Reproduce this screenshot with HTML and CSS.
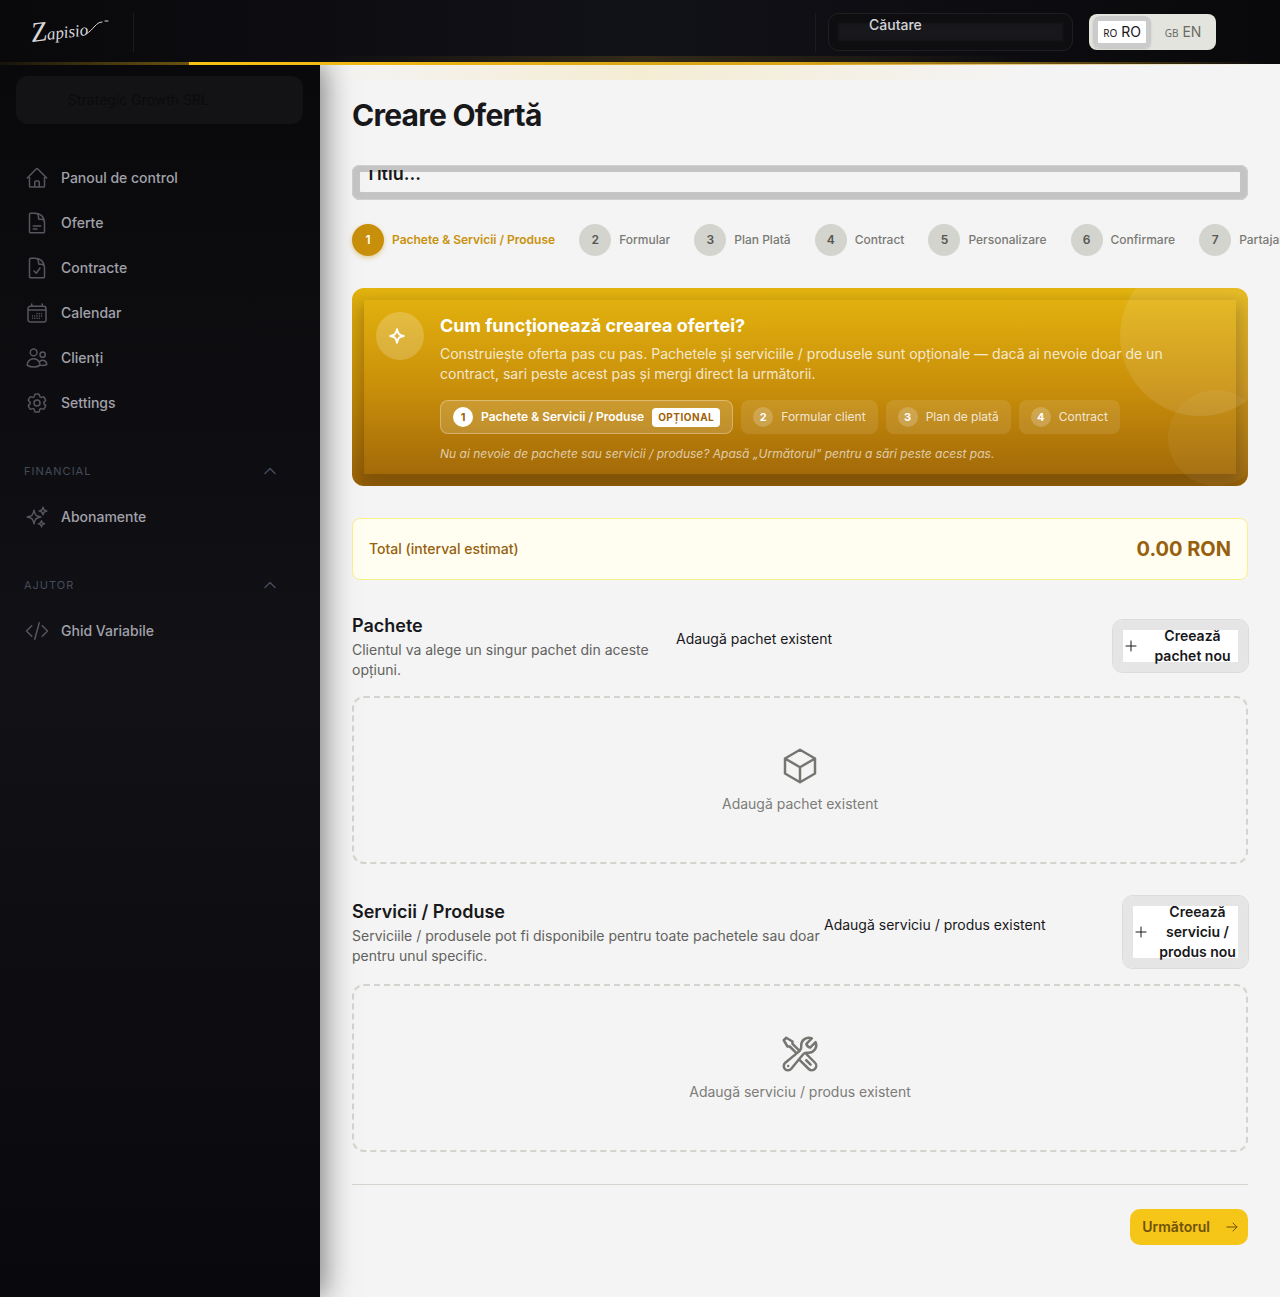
FILE: index.html
```html
<!DOCTYPE html>
<html lang="ro">
<head>
  <meta charset="UTF-8">
  <meta name="viewport" content="width=device-width, initial-scale=1.0">
  <title>Creare Ofertă</title>
  <link rel="stylesheet" href="styles.css">
</head>
<body>
  <header class="topbar">
    <a href="#" class="logo" aria-label="Zapisio">
      <svg width="80" height="34" viewBox="0 0 80 34">
        <text class="logo-text" x="2" y="27" transform="rotate(-7 2 27)"><tspan class="logo-initial">Z</tspan>apisio</text>
        <path d="M56 19c4-2 6-5 9-8 2-2 4-4 7-4M75 6h3" />
      </svg>
    </a>
    <span class="divider"></span>
    <div class="topbar-right">
      <span class="divider"></span>
      <div class="search">
        <input type="text" placeholder="Căutare" aria-label="Căutare">
      </div>
      <div class="lang">
        <button type="button" class="lang-btn active"><small>RO</small> RO</button>
        <button type="button" class="lang-btn"><small>GB</small> EN</button>
      </div>
    </div>
  </header>

  <div class="layout">
    <aside class="sidebar">
      <button type="button" class="company">Strategic Growth SRL</button>

      <nav class="nav">
        <a href="#" class="nav-item">
          <svg class="icon" viewBox="0 0 24 24"><path d="m2.25 12 8.954-8.955c.44-.439 1.152-.439 1.591 0L21.75 12M4.5 9.75v10.125c0 .621.504 1.125 1.125 1.125H9.75v-4.875c0-.621.504-1.125 1.125-1.125h2.25c.621 0 1.125.504 1.125 1.125V21h4.125c.621 0 1.125-.504 1.125-1.125V9.75M8.25 21h8.25" /></svg>
          Panoul de control
        </a>
        <a href="#" class="nav-item">
          <svg class="icon" viewBox="0 0 24 24"><path d="M19.5 14.25v-2.625a3.375 3.375 0 0 0-3.375-3.375h-1.5A1.125 1.125 0 0 1 13.5 7.125v-1.5a3.375 3.375 0 0 0-3.375-3.375H8.25m0 12.75h7.5m-7.5 3H12M10.5 2.25H5.625c-.621 0-1.125.504-1.125 1.125v17.25c0 .621.504 1.125 1.125 1.125h12.75c.621 0 1.125-.504 1.125-1.125V11.25a9 9 0 0 0-9-9Z" /></svg>
          Oferte
        </a>
        <a href="#" class="nav-item">
          <svg class="icon" viewBox="0 0 24 24"><path d="M10.125 2.25h-4.5c-.621 0-1.125.504-1.125 1.125v17.25c0 .621.504 1.125 1.125 1.125h12.75c.621 0 1.125-.504 1.125-1.125v-9M10.125 2.25h.375a9 9 0 0 1 9 9v.375M10.125 2.25A3.375 3.375 0 0 1 13.5 5.625v1.5c0 .621.504 1.125 1.125 1.125h1.5a3.375 3.375 0 0 1 3.375 3.375M9 15l2.25 2.25L15 12" /></svg>
          Contracte
        </a>
        <a href="#" class="nav-item">
          <svg class="icon" viewBox="0 0 24 24"><path d="M6.75 3v2.25M17.25 3v2.25M3 18.75V7.5a2.25 2.25 0 0 1 2.25-2.25h13.5A2.25 2.25 0 0 1 21 7.5v11.25m-18 0A2.25 2.25 0 0 0 5.25 21h13.5A2.25 2.25 0 0 0 21 18.75m-18 0v-7.5M21 18.75v-7.5M3 9h18M12 12.75h.008v.008H12v-.008ZM12 15h.008v.008H12V15Zm0 2.25h.008v.008H12v-.008ZM9.75 15h.008v.008H9.75V15Zm0 2.25h.008v.008H9.75v-.008ZM7.5 15h.008v.008H7.5V15Zm0 2.25h.008v.008H7.5v-.008Zm6.75-4.5h.008v.008h-.008v-.008Zm0 2.25h.008v.008h-.008V15Zm0 2.25h.008v.008h-.008v-.008Zm2.25-4.5h.008v.008H16.5v-.008Zm0 2.25h.008v.008H16.5V15Z" /></svg>
          Calendar
        </a>
        <a href="#" class="nav-item">
          <svg class="icon" viewBox="0 0 24 24"><path d="M15 19.128a9.38 9.38 0 0 0 2.625.372 9.337 9.337 0 0 0 4.121-.952 4.125 4.125 0 0 0-7.533-2.493M15 19.128v-.003c0-1.113-.285-2.16-.786-3.07M15 19.128v.106A12.318 12.318 0 0 1 8.624 21c-2.331 0-4.512-.645-6.374-1.766l-.001-.109a6.375 6.375 0 0 1 11.964-3.07M12 6.375a3.375 3.375 0 1 1-6.75 0 3.375 3.375 0 0 1 6.75 0Zm8.25 2.25a2.625 2.625 0 1 1-5.25 0 2.625 2.625 0 0 1 5.25 0Z" /></svg>
          Clienți
        </a>
        <a href="#" class="nav-item">
          <svg class="icon" viewBox="0 0 24 24"><path d="M9.594 3.94c.09-.542.56-.94 1.11-.94h2.593c.55 0 1.02.398 1.11.94l.213 1.281c.063.374.313.686.645.87.074.04.147.083.22.127.325.196.72.257 1.075.124l1.217-.456a1.125 1.125 0 0 1 1.37.49l1.296 2.247a1.125 1.125 0 0 1-.26 1.431l-1.003.827c-.293.241-.438.613-.43.992a7.723 7.723 0 0 1 0 .255c-.008.378.137.75.43.991l1.004.827c.424.35.534.955.26 1.43l-1.298 2.247a1.125 1.125 0 0 1-1.369.491l-1.217-.456c-.355-.133-.75-.072-1.076.124a6.47 6.47 0 0 1-.22.128c-.331.183-.581.495-.644.869l-.213 1.281c-.09.543-.56.94-1.11.94h-2.594c-.55 0-1.019-.398-1.11-.94l-.213-1.281c-.062-.374-.312-.686-.644-.87a6.52 6.52 0 0 1-.22-.127c-.325-.196-.72-.257-1.076-.124l-1.217.456a1.125 1.125 0 0 1-1.369-.49l-1.297-2.247a1.125 1.125 0 0 1 .26-1.431l1.004-.827c.292-.24.437-.613.43-.991a6.932 6.932 0 0 1 0-.255c.007-.38-.138-.751-.43-.992l-1.004-.827a1.125 1.125 0 0 1-.26-1.43l1.297-2.247a1.125 1.125 0 0 1 1.37-.491l1.216.456c.356.133.751.072 1.076-.124.072-.044.146-.086.22-.128.332-.183.582-.495.644-.869l.214-1.28Z" /><path d="M15 12a3 3 0 1 1-6 0 3 3 0 0 1 6 0Z" /></svg>
          Settings
        </a>
      </nav>

      <button type="button" class="nav-heading">
        FINANCIAL
        <svg class="chevron" viewBox="0 0 12 8"><path d="M1 6.5 6 1.5l5 5" /></svg>
      </button>
      <nav class="nav">
        <a href="#" class="nav-item">
          <svg class="icon" viewBox="0 0 24 24"><path d="M9.813 15.904 9 18.75l-.813-2.846a4.5 4.5 0 0 0-3.09-3.09L2.25 12l2.846-.813a4.5 4.5 0 0 0 3.09-3.09L9 5.25l.813 2.846a4.5 4.5 0 0 0 3.09 3.09L15.75 12l-2.846.813a4.5 4.5 0 0 0-3.09 3.09ZM18.259 8.715 18 9.75l-.259-1.035a3.375 3.375 0 0 0-2.455-2.456L14.25 6l1.036-.259a3.375 3.375 0 0 0 2.455-2.456L18 2.25l.259 1.035a3.375 3.375 0 0 0 2.456 2.456L21.75 6l-1.035.259a3.375 3.375 0 0 0-2.456 2.456ZM16.894 20.567 16.5 21.75l-.394-1.183a2.25 2.25 0 0 0-1.423-1.423L13.5 18.75l1.183-.394a2.25 2.25 0 0 0 1.423-1.423l.394-1.183.394 1.183a2.25 2.25 0 0 0 1.423 1.423l1.183.394-1.183.394a2.25 2.25 0 0 0-1.423 1.423Z" /></svg>
          Abonamente
        </a>
      </nav>

      <button type="button" class="nav-heading">
        AJUTOR
        <svg class="chevron" viewBox="0 0 12 8"><path d="M1 6.5 6 1.5l5 5" /></svg>
      </button>
      <nav class="nav">
        <a href="#" class="nav-item">
          <svg class="icon" viewBox="0 0 24 24"><path d="M17.25 6.75 22.5 12l-5.25 5.25m-10.5 0L1.5 12l5.25-5.25m7.5-3-4.5 16.5" /></svg>
          Ghid Variabile
        </a>
      </nav>
    </aside>

    <main class="content">
      <h1>Creare Ofertă</h1>

      <div class="title-field">
        <div class="title-clip">
          <input type="text" placeholder="Titlu..." aria-label="Titlu">
        </div>
      </div>

      <ol class="steps">
        <li class="step active"><span class="step-number">1</span>Pachete &amp; Servicii / Produse</li>
        <li class="step"><span class="step-number">2</span>Formular</li>
        <li class="step"><span class="step-number">3</span>Plan Plată</li>
        <li class="step"><span class="step-number">4</span>Contract</li>
        <li class="step"><span class="step-number">5</span>Personalizare</li>
        <li class="step"><span class="step-number">6</span>Confirmare</li>
        <li class="step"><span class="step-number">7</span>Partajare</li>
      </ol>

      <section class="banner">
        <div class="banner-inner">
          <span class="banner-icon">
            <svg viewBox="0 0 24 24"><path d="M9.8 15.9 9 18.75l-.813-2.846a4.5 4.5 0 0 0-3.09-3.09L2.25 12l2.846-.813a4.5 4.5 0 0 0 3.09-3.09L9 5.25l.813 2.846a4.5 4.5 0 0 0 3.09 3.09L15.75 12l-2.846.813a4.5 4.5 0 0 0-3.09 3.09Z" /></svg>
          </span>
          <div class="banner-text">
            <h2>Cum funcționează crearea ofertei?</h2>
            <p>Construiește oferta pas cu pas. Pachetele și serviciile / produsele sunt opționale — dacă ai nevoie doar de un contract, sari peste acest pas și mergi direct la următorii.</p>
            <ul class="chips">
              <li class="chip active"><span class="chip-number">1</span>Pachete &amp; Servicii / Produse<span class="tag">OPȚIONAL</span></li>
              <li class="chip"><span class="chip-number">2</span>Formular client</li>
              <li class="chip"><span class="chip-number">3</span>Plan de plată</li>
              <li class="chip"><span class="chip-number">4</span>Contract</li>
            </ul>
            <p class="banner-note">Nu ai nevoie de pachete sau servicii / produse? Apasă „Următorul" pentru a sări peste acest pas.</p>
          </div>
        </div>
      </section>

      <div class="total">
        <span>Total (interval estimat)</span>
        <strong>0.00 RON</strong>
      </div>

      <section class="block">
        <div class="block-head packages">
          <div>
            <h3>Pachete</h3>
            <p>Clientul va alege un singur pachet din aceste opțiuni.</p>
          </div>
          <button type="button" class="picker">Adaugă pachet existent</button>
          <button type="button" class="btn-create">
            <svg viewBox="0 0 12 12"><path d="M6 1v10M1 6h10" /></svg>
            <span>Creează pachet nou</span>
          </button>
        </div>
        <div class="empty">
          <svg class="empty-icon" viewBox="0 0 24 24"><path d="m21 7.5-9-5.25L3 7.5m18 0-9 5.25m9-5.25v9l-9 5.25M3 7.5l9 5.25M3 7.5v9l9 5.25m0-9v9" /></svg>
          <p>Adaugă pachet existent</p>
        </div>
      </section>

      <section class="block">
        <div class="block-head services">
          <div>
            <h3>Servicii / Produse</h3>
            <p>Serviciile / produsele pot fi disponibile pentru toate pachetele sau doar pentru unul specific.</p>
          </div>
          <button type="button" class="picker">Adaugă serviciu / produs existent</button>
          <button type="button" class="btn-create">
            <svg viewBox="0 0 12 12"><path d="M6 1v10M1 6h10" /></svg>
            <span>Creează serviciu / produs nou</span>
          </button>
        </div>
        <div class="empty">
          <svg class="empty-icon" viewBox="0 0 24 24"><path d="M11.42 15.17 17.25 21A2.652 2.652 0 0 0 21 17.25l-5.877-5.877M11.42 15.17l2.496-3.03c.317-.384.74-.626 1.208-.766M11.42 15.17l-4.655 5.653a2.548 2.548 0 1 1-3.586-3.586l6.837-5.63m5.108-.233c.55-.164 1.163-.188 1.743-.14a4.5 4.5 0 0 0 4.486-6.336l-3.276 3.277a3.004 3.004 0 0 1-2.25-2.25l3.276-3.276a4.5 4.5 0 0 0-6.336 4.486c.091 1.076-.071 2.264-.904 2.95l-.102.085m-1.745 1.437L5.909 7.5H4.5L2.25 3.75l1.5-1.5L7.5 4.5v1.409l4.26 4.26m-1.745 1.437 1.745-1.437m6.615 8.206L15.75 15.75M4.867 19.125h.008v.008h-.008v-.008Z" /></svg>
          <p>Adaugă serviciu / produs existent</p>
        </div>
      </section>

      <div class="actions">
        <button type="button" class="btn-next">
          Următorul
          <svg viewBox="0 0 12 12"><path d="M1 6h10M7 2l4 4-4 4" /></svg>
        </button>
      </div>
    </main>
  </div>
</body>
</html>
```

FILE: styles.css
```css
* {
  box-sizing: border-box;
}

body {
  font-family: Inter, "Liberation Sans", sans-serif;
  font-size: 14px;
  line-height: 20px;
  margin: 0;
  min-height: 100vh;
  display: flex;
  flex-direction: column;
  background-color: #f4f4f4;
  color: #18181b;
}

h1, h2, h3, p, ul, ol {
  margin: 0;
  padding: 0;
}

ul, ol {
  list-style: none;
}

button, input {
  font: inherit;
  color: inherit;
  border: none;
  background: none;
  margin: 0;
  padding: 0;
}

button {
  cursor: pointer;
}

svg {
  flex: none;
  fill: none;
  stroke: currentColor;
  stroke-linecap: round;
  stroke-linejoin: round;
}

/* top bar */
.topbar {
  position: relative;
  z-index: 3;
  height: 64px;
  padding: 0 64px 0 30px;
  display: flex;
  align-items: center;
  background: linear-gradient(90deg, #09090b, #111118 50%, #09090b);
}

.topbar::before {
  content: "";
  position: absolute;
  left: 0;
  right: 0;
  bottom: -16px;
  height: 24px;
  background: linear-gradient(90deg, transparent 25%, rgba(250, 190, 20, 0.15) 50%, transparent 80%);
}

.topbar::after {
  content: "";
  position: absolute;
  left: 0;
  right: 0;
  bottom: -1px;
  height: 3px;
  background: linear-gradient(90deg, rgba(250, 194, 19, 0.05), rgba(250, 194, 19, 0.4) 189px, #fac213 189px, #dca716 50%, #d9a516 62%, transparent 99%);
}

.logo {
  display: flex;
  margin-right: 23px;
  color: #d8d8dc;
}

.logo-text {
  font-family: "Liberation Serif", serif;
  font-size: 17px;
  font-style: italic;
  fill: currentColor;
  stroke: none;
}

.logo-initial {
  font-size: 28px;
}

.divider {
  width: 1px;
  height: 39px;
  background-color: #1c1c20;
}

.topbar-right {
  margin-left: auto;
  display: flex;
  align-items: center;
}

.search {
  width: 245px;
  height: 38px;
  margin: 0 16px 0 12px;
  padding: 1px 40px;
  border: 1px solid #1f1f22;
  border-radius: 10px;
  background-color: #18181c;
  box-shadow: inset 0 0 2px 9px #0e0e10;
}

.search input {
  display: block;
  width: 100%;
  height: 20px;
  font-weight: 500;
}

.search input::placeholder {
  color: #d4d4d8;
  opacity: 1;
}

.lang {
  display: flex;
  gap: 3px;
  padding: 2px 4px;
  border-radius: 8px;
  background-color: #e2e4dd;
}

.lang-btn {
  width: 58px;
  height: 32px;
  border-radius: 6px;
  color: #6b6b66;
  white-space: nowrap;
}

.lang-btn small {
  font-family: "Noto Sans", sans-serif;
  font-size: 10px;
}

.lang-btn.active {
  background-color: #fff;
  color: #18181b;
  box-shadow: inset 0 0 0 5px #cbcbcb, 0 1px 2px rgba(0, 0, 0, 0.15);
}

/* sidebar */
.layout {
  flex: 1;
  display: grid;
  grid-template-columns: 320px minmax(0, 1fr);
}

.sidebar {
  position: relative;
  z-index: 2;
  padding: 12px 17px 32px 16px;
  background: linear-gradient(180deg, #09090b, #111116 50%, #09090d);
  box-shadow: 4px 0 28px rgba(0, 0, 0, 0.5);
}

.company {
  display: block;
  width: 100%;
  height: 48px;
  margin-bottom: 31px;
  padding-left: 52px;
  border-radius: 12px;
  background-color: #131315;
  color: #0b0b0c;
  text-align: left;
}

.nav-item {
  display: flex;
  align-items: center;
  gap: 12px;
  height: 45px;
  padding-left: 9px;
  color: #a1a1aa;
  font-weight: 500;
  text-decoration: none;
}

.icon {
  width: 24px;
  height: 24px;
  color: #56565e;
  stroke-width: 1.5;
}

.nav-heading {
  display: flex;
  align-items: center;
  justify-content: space-between;
  width: 100%;
  height: 20px;
  margin: 36px 0 13px;
  padding: 0 27px 0 8px;
  color: #434c5b;
  font-size: 11px;
  letter-spacing: 1px;
}

.chevron {
  width: 12px;
  height: 8px;
  stroke-width: 1.5;
}

/* page */
.content {
  padding: 33px 32px 52px;
  overflow: hidden;
}

h1 {
  font-size: 30px;
  line-height: 36px;
  font-weight: 700;
  letter-spacing: -0.025em;
}

.title-field {
  height: 35px;
  margin: 32px 0 24px;
  padding: 5px;
  border-radius: 8px;
  box-shadow:
    inset 0 0 0 1px #d0d0cf,
    inset 0 0 0 7px #c4c4c4,
    inset 1px -1px 0 7px #c4c4c4,
    inset -1px 0 0 7px #c4c4c4;
}

.title-clip {
  height: 25px;
  overflow: hidden;
}

.title-clip input {
  display: block;
  width: 100%;
  height: 24px;
  margin-top: -9px;
  padding: 0 8px;
  font-size: 18px;
  font-weight: 600;
}

.title-clip input::placeholder {
  color: #18181b;
  opacity: 1;
}

.steps {
  display: flex;
  gap: 24px;
  margin-bottom: 32px;
}

.step {
  flex: none;
  display: flex;
  align-items: center;
  gap: 8px;
  color: #7a7a75;
  font-size: 12px;
  font-weight: 500;
}

.step-number {
  width: 32px;
  height: 32px;
  line-height: 32px;
  border-radius: 50%;
  background-color: #d3d4cd;
  color: #565652;
  font-weight: 600;
  text-align: center;
}

.step.active {
  color: #c8920c;
  font-weight: 600;
}

.step.active .step-number {
  background-color: #c8900a;
  color: #fff;
  box-shadow: 0 2px 5px rgba(200, 144, 10, 0.4);
}

/* info banner */
.banner {
  position: relative;
  overflow: hidden;
  margin-bottom: 32px;
  padding: 12px;
  border-radius: 12px;
  background: linear-gradient(180deg, #e5b50f, #c98f0a 50%, #9e6509);
  color: #fff;
}

.banner::before,
.banner::after {
  content: "";
  position: absolute;
  border-radius: 50%;
  background-color: rgba(255, 255, 255, 0.1);
}

.banner::before {
  top: -32px;
  right: -32px;
  width: 160px;
  height: 160px;
}

.banner::after {
  right: -16px;
  bottom: 0;
  width: 96px;
  height: 96px;
  background-color: rgba(255, 255, 255, 0.05);
}

.banner-inner {
  display: flex;
  gap: 16px;
  padding: 12px;
  box-shadow: 0 8px 16px 5px rgba(0, 0, 0, 0.22);
}

.banner-icon {
  flex: none;
  display: flex;
  align-items: center;
  justify-content: center;
  width: 48px;
  height: 48px;
  border-radius: 50%;
  background-color: rgba(255, 255, 255, 0.2);
}

.banner-icon svg {
  width: 24px;
  height: 24px;
  stroke-width: 2;
}

.banner h2 {
  font-size: 18px;
  line-height: 28px;
  font-weight: 700;
}

.banner p {
  max-width: 760px;
  margin-top: 4px;
  color: rgba(255, 255, 255, 0.8);
}

.chips {
  display: flex;
  flex-wrap: wrap;
  gap: 8px;
  margin-top: 16px;
}

.chip {
  display: flex;
  align-items: center;
  gap: 8px;
  height: 34px;
  padding: 0 12px;
  border-radius: 8px;
  background-color: rgba(255, 255, 255, 0.1);
  color: rgba(255, 255, 255, 0.8);
  font-size: 12px;
}

.chip.active {
  border: 1px solid rgba(255, 255, 255, 0.3);
  background-color: rgba(255, 255, 255, 0.15);
  color: #fff;
  font-weight: 600;
}

.chip-number {
  width: 20px;
  height: 20px;
  border-radius: 50%;
  background-color: rgba(255, 255, 255, 0.2);
  color: #fff;
  font-size: 11px;
  font-weight: 700;
  text-align: center;
}

.chip.active .chip-number {
  background-color: #fff;
  color: #a16207;
}

.tag {
  padding: 0 6px;
  border-radius: 4px;
  background-color: #fff;
  color: #a16207;
  font-size: 10px;
  line-height: 19px;
  font-weight: 700;
  letter-spacing: 0.5px;
}

.banner .banner-note {
  margin-top: 12px;
  color: rgba(255, 255, 255, 0.65);
  font-size: 12px;
  line-height: 16px;
  font-style: italic;
}

/* total */
.total {
  display: flex;
  align-items: center;
  justify-content: space-between;
  padding: 16px;
  border: 1px solid #fbf08e;
  border-radius: 8px;
  background-color: #fffef0;
  color: #96600f;
  font-weight: 500;
}

.total strong {
  font-size: 20px;
  line-height: 28px;
  font-weight: 700;
}

/* packages and services */
.block {
  margin-top: 32px;
}

.block-head {
  display: grid;
  align-items: center;
  gap: 4px;
  margin-bottom: 16px;
}

.packages {
  grid-template-columns: 320px 1fr 135px;
}

.services {
  grid-template-columns: 468px 1fr 125px;
}

.block h3 {
  font-size: 18px;
  line-height: 28px;
  font-weight: 600;
}

.block p {
  color: #62625e;
}

.picker {
  height: 34px;
  padding-bottom: 14px;
  text-align: left;
}

.btn-create {
  display: flex;
  align-items: center;
  padding: 6px 12px;
  border-radius: 10px;
  background-color: #fff;
  box-shadow: inset 0 0 0 10px #e5e5e5, 0 0 0 1px #dcdcdc;
  font-weight: 600;
}

.btn-create svg {
  width: 12px;
  height: 12px;
}

.btn-create span {
  flex: 1;
  margin: 0 -4px 0 8px;
}

.empty {
  display: flex;
  flex-direction: column;
  align-items: center;
  gap: 8px;
  padding: 48px;
  border: 2px dashed #d3d4cd;
  border-radius: 12px;
}

.empty-icon {
  width: 40px;
  height: 40px;
  color: #757571;
  stroke-width: 1.5;
}

.empty p {
  color: #7c7c78;
}

.actions {
  display: flex;
  justify-content: flex-end;
  margin-top: 32px;
  padding-top: 24px;
  border-top: 1px solid #d3d4cd;
}

.btn-next {
  display: flex;
  align-items: center;
  gap: 16px;
  height: 36px;
  padding: 0 10px 0 12px;
  border-radius: 10px;
  background-color: #f5c518;
  color: #6f5208;
  font-weight: 600;
}

.btn-next svg {
  width: 12px;
  height: 12px;
}
```
